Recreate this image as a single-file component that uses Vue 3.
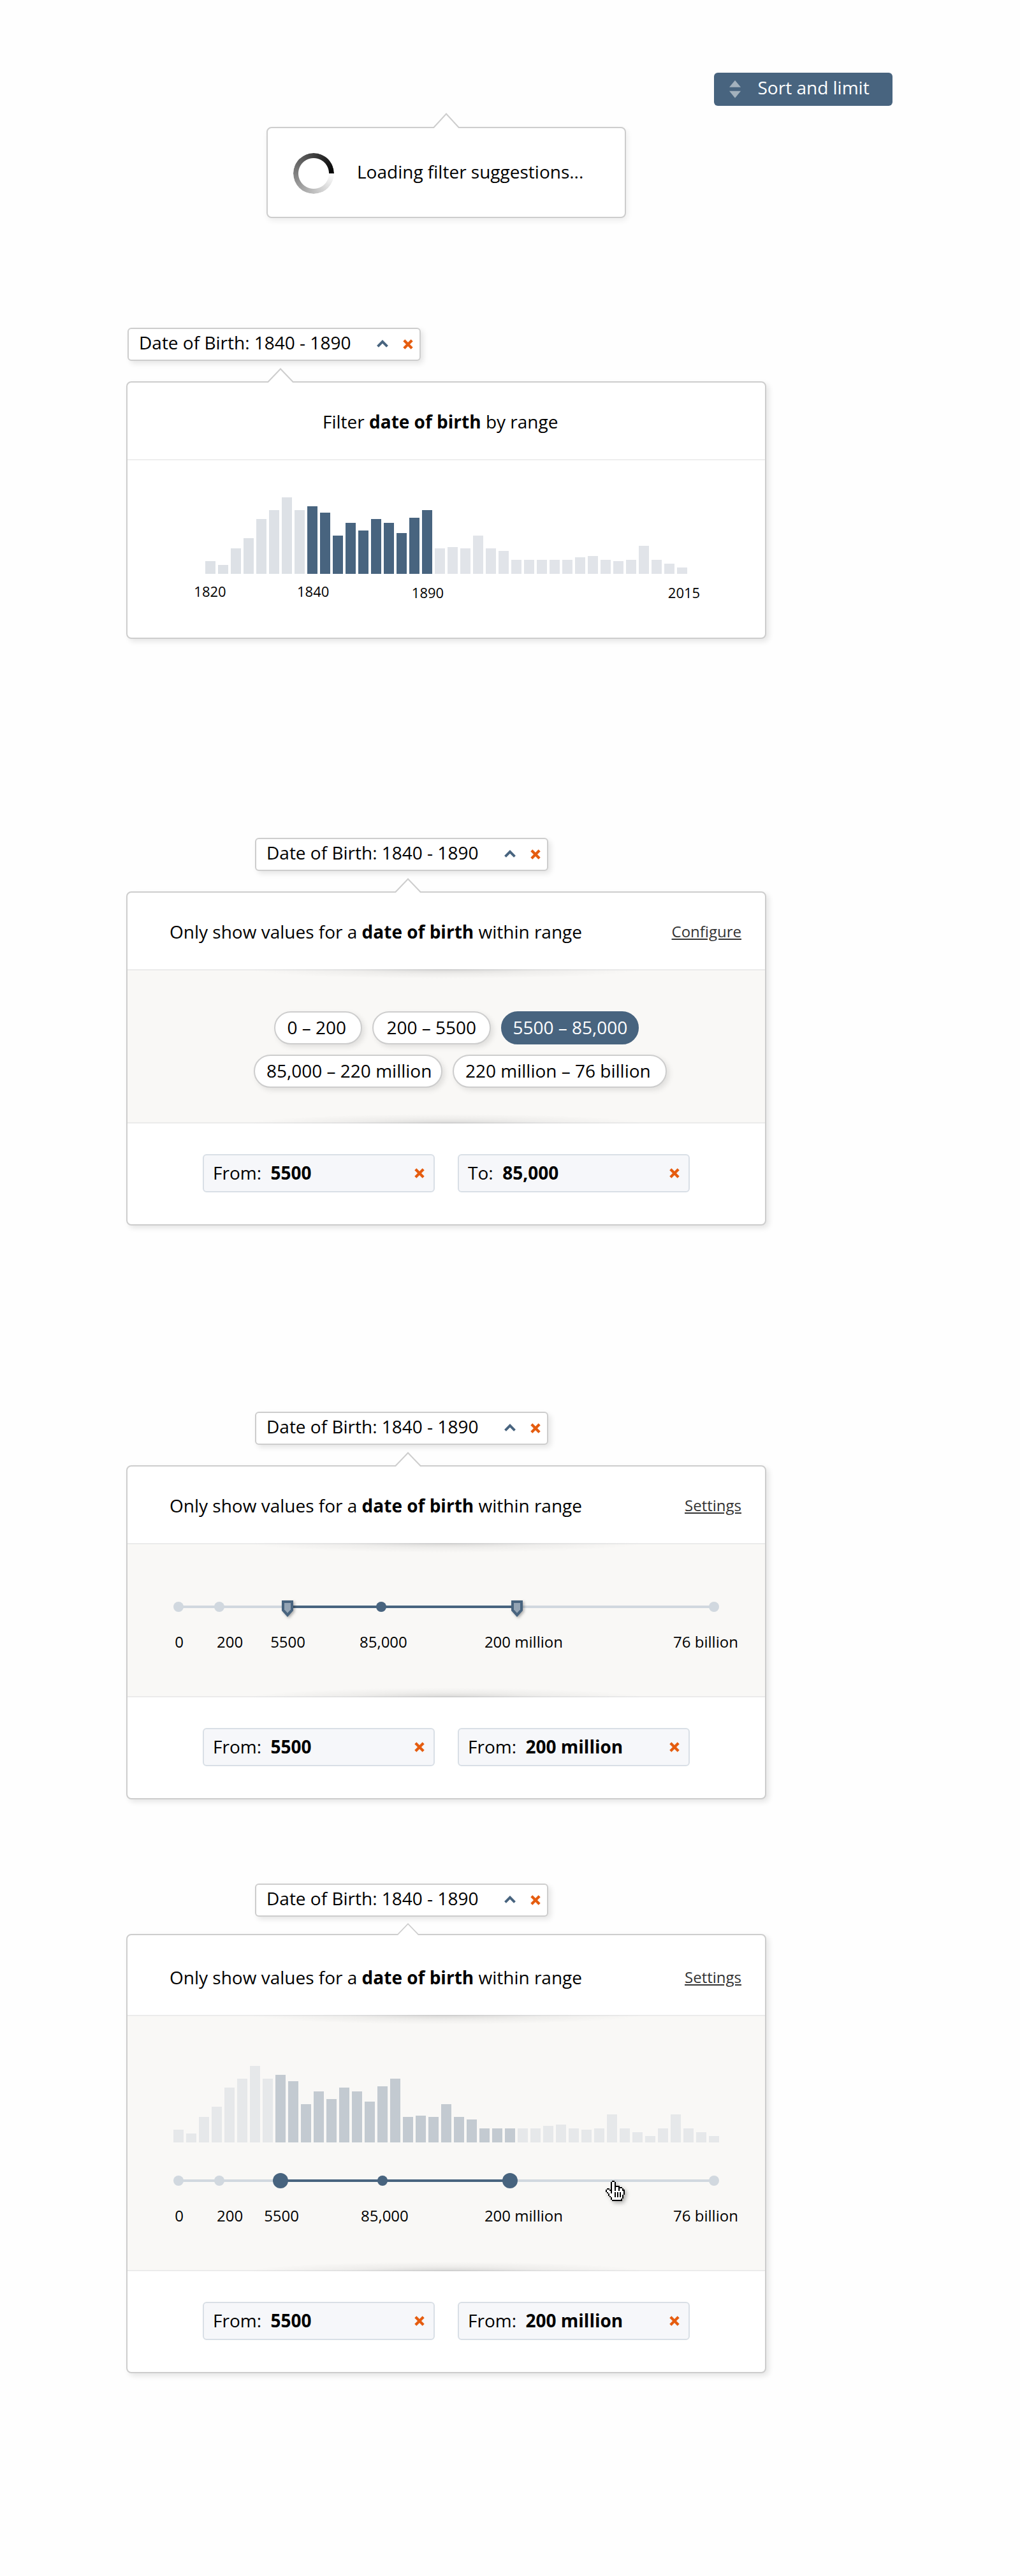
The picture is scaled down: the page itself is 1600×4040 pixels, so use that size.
<script setup>
const histogram = [20, 14, 40, 56, 86, 100, 120, 100, 106, 96, 60, 80, 68, 86, 80, 64, 88, 100, 40, 42, 40, 60, 40, 36, 22, 22, 22, 22, 22, 26, 28, 22, 20, 22, 44, 22, 16, 10]
const longHistogram = [...histogram, 22, 44, 22, 16, 10]

const toBars = (values, from, to) =>
  values.map((height, i) => ({ height, selected: i >= from && i <= to, after: i > to }))

const years = [
  { label: '1820', x: 129.5, y: 36 },
  { label: '1840', x: 291.2, y: 36 },
  { label: '1890', x: 471, y: 38 },
  { label: '2015', x: 873, y: 38 },
]

const pillRows = [
  [
    { text: '0 – 200', width: 138, pad: 18.5 },
    { text: '200 – 5500', width: 186, pad: 20.5 },
    { text: '5500 – 85,000', width: 216, pad: 16.5, active: true },
  ],
  [
    { text: '85,000 – 220 million', width: 296, pad: 18 },
    { text: '220 million – 76 billion', width: 336, pad: 18 },
  ],
]

const panels = [
  {
    id: 'presets',
    link: 'Configure',
    pills: pillRows,
    fields: [{ name: 'From:', value: '5500' }, { name: 'To:', value: '85,000' }],
  },
  {
    id: 'slider',
    link: 'Settings',
    slider: {
      handle: 'tag',
      from: 251,
      to: 611,
      stops: [80, 144, 398, 920],
      labels: [['0', 81], ['200', 160.6], ['5500', 251.6], ['85,000', 401.4], ['200 million', 621.4], ['76 billion', 907]],
    },
    fields: [{ name: 'From:', value: '5500' }, { name: 'From:', value: '200 million' }],
  },
  {
    id: 'combined',
    link: 'Settings',
    bars: toBars(longHistogram, 8, 26),
    slider: {
      handle: 'dot',
      from: 240,
      to: 600,
      stops: [80, 144, 400, 920],
      labels: [['0', 81], ['200', 160.6], ['5500', 241.6], ['85,000', 403.4], ['200 million', 621.4], ['76 billion', 907]],
    },
    fields: [{ name: 'From:', value: '5500' }, { name: 'From:', value: '200 million' }],
  },
]

const yearBars = toBars(histogram, 8, 17)

// Pointer bitmap: '#' outline, 'o' fill
const pointer = [
  '.....##........',
  '....#oo#.......',
  '....#oo#.......',
  '....#oo#.......',
  '....#oo####....',
  '....#oo#oo###..',
  '.##.#oo#oo#oo#.',
  '#oo##oo#oo#oo##',
  '#ooo#ooooooooo#',
  '.#oo#oo#o#o#oo#',
  '..#oooo#o#o#oo#',
  '..#oooo#o#o#o#.',
  '...#ooo#o#o#o#.',
  '....#oooooooo#.',
  '....#ooooooo#..',
  '.....########..',
]
const pixels = pointer.flatMap((row, y) =>
  [...row].map((c, x) => ({ x, y, c })).filter((p) => p.c !== '.'),
)
</script>

<template>
  <main class="page">
    <button class="sort">
      <svg class="sort-icon" width="18" height="28" viewBox="0 0 18 28">
        <path d="M9 0 18 10.7H0ZM0 16.7H18L9 27.7Z" fill="#a3b1bd" />
      </svg>
      <span>Sort and limit</span>
    </button>

    <section class="popup loading">
      <svg class="arrow" width="44" height="24" viewBox="0 0 44 24">
        <path d="M1 24.5 22 1.5 43 24.5" fill="#fff" stroke="#cdcdcd" stroke-width="2" />
      </svg>
      <span class="spinner"></span>
      <span class="loading-text">Loading filter suggestions...</span>
    </section>

    <div class="chip chip-first">
      <span class="chip-text">Date of Birth: 1840 - 1890</span>
      <svg class="chevron" width="18" height="12" viewBox="0 0 18 12"><path d="M1.5 10.3 9 2.8 16.5 10.3" fill="none" stroke="#48647f" stroke-width="4" /></svg>
      <svg class="cross" width="16" height="16" viewBox="0 0 16 16"><path d="M1.8 1.8 14.2 14.2M14.2 1.8 1.8 14.2" stroke="#e55c0f" stroke-width="4.3" /></svg>
    </div>

    <section class="popup panel panel-years">
      <svg class="arrow" width="44" height="24" viewBox="0 0 44 24">
        <path d="M1 24.5 22 2.5 43 24.5" fill="#fff" stroke="#cdcdcd" stroke-width="2" />
      </svg>
      <header class="head head-years">
        <h2>Filter <b>date of birth</b> by range</h2>
      </header>
      <div class="years">
        <div class="bars">
          <i
            v-for="(bar, i) in yearBars"
            :key="i"
            :class="{ selected: bar.selected, after: bar.after }"
            :style="{ height: bar.height + 'px' }"
          ></i>
        </div>
        <svg class="axis" width="1000" height="60">
          <text v-for="year in years" :key="year.label" :x="year.x" :y="year.y" class="year">{{ year.label }}</text>
        </svg>
      </div>
    </section>

    <template v-for="panel in panels" :key="panel.id">
      <div class="chip" :class="'chip-' + panel.id">
        <span class="chip-text">Date of Birth: 1840 - 1890</span>
        <svg class="chevron" width="18" height="12" viewBox="0 0 18 12"><path d="M1.5 10.3 9 2.8 16.5 10.3" fill="none" stroke="#48647f" stroke-width="4" /></svg>
        <svg class="cross" width="16" height="16" viewBox="0 0 16 16"><path d="M1.8 1.8 14.2 14.2M14.2 1.8 1.8 14.2" stroke="#e55c0f" stroke-width="4.3" /></svg>
      </div>

      <section class="popup panel" :class="'panel-' + panel.id">
        <svg class="arrow" width="44" height="24" viewBox="0 0 44 24">
          <path d="M1 24.5 22 2.5 43 24.5" fill="#fff" stroke="#cdcdcd" stroke-width="2" />
        </svg>
        <header class="head">
          <h2>Only show values for a <b>date of birth</b> within range</h2>
          <a class="link">{{ panel.link }}</a>
        </header>

        <div class="body">
          <div v-if="panel.pills" class="pills">
            <div v-for="(row, r) in panel.pills" :key="r" class="pill-row">
              <span
                v-for="pill in row"
                :key="pill.text"
                class="pill"
                :class="{ active: pill.active }"
                :style="{ width: pill.width + 'px', paddingLeft: pill.pad + 'px' }"
              >{{ pill.text }}</span>
            </div>
          </div>

          <div v-if="panel.bars" class="bars bars-muted">
            <i
              v-for="(bar, i) in panel.bars"
              :key="i"
              :class="{ selected: bar.selected }"
              :style="{ height: bar.height + 'px' }"
            ></i>
          </div>

          <svg v-if="panel.slider" class="slider" width="1000" height="100">
            <path d="M80 20H920" stroke="#d1d8df" stroke-width="4" />
            <path :d="`M${panel.slider.from} 20H${panel.slider.to}`" stroke="#48647f" stroke-width="4" />
            <circle
              v-for="x in panel.slider.stops"
              :key="x"
              :cx="x"
              cy="20"
              r="8"
              :fill="x > panel.slider.from && x < panel.slider.to ? '#48647f' : '#d1d8df'"
            />
            <g v-for="x in [panel.slider.from, panel.slider.to]" :key="'h' + x" :transform="`translate(${x} 20)`">
              <circle v-if="panel.slider.handle === 'dot'" r="12" fill="#48647f" />
              <g v-else class="tag">
                <path d="M-9 -10H9V6L0 16L-9 6Z" fill="#48647f" />
                <path d="M-5 -6H5V4.2L0 9.8L-5 4.2Z" fill="#94a4b4" />
              </g>
            </g>
            <text v-for="[label, x] in panel.slider.labels" :key="label" :x="x" y="84" class="tick">{{ label }}</text>
          </svg>

          <svg v-if="panel.bars" class="pointer" width="30" height="32" viewBox="0 0 15 16" shape-rendering="crispEdges">
            <rect
              v-for="p in pixels"
              :key="p.x + '-' + p.y"
              :x="p.x"
              :y="p.y"
              width="1"
              height="1"
              :fill="p.c === '#' ? '#000' : '#fff'"
            />
          </svg>
        </div>

        <footer class="foot">
          <div v-for="field in panel.fields" :key="field.value" class="field">
            <span class="field-name">{{ field.name }}</span>
            <b class="field-value">{{ field.value }}</b>
            <svg class="cross" width="16" height="16" viewBox="0 0 16 16"><path d="M1.8 1.8 14.2 14.2M14.2 1.8 1.8 14.2" stroke="#e55c0f" stroke-width="4.3" /></svg>
          </div>
        </footer>
      </section>
    </template>
  </main>
</template>

<style>
body {
  background: #fefefe;
}
</style>

<style scoped>
.page {
  width: 1600px;
  height: 4040px;
  padding-top: 114px;
  box-sizing: border-box;
  display: flex;
  flex-direction: column;
  align-items: flex-start;
  background: #fefefe;
  color: #000;
  font: 28px/38px 'Open Sans', sans-serif;
}
.page * {
  box-sizing: border-box;
}
svg {
  display: block;
  flex: none;
}

.sort {
  display: flex;
  align-items: center;
  gap: 26.5px;
  width: 280px;
  height: 52px;
  flex: none;
  margin-left: 1120px;
  padding: 0 0 0 24px;
  border: 0;
  border-radius: 6px;
  background: #48647f;
  color: #fff;
  font: inherit;
}
.sort span {
  margin-bottom: 6px;
}

.popup {
  position: relative;
  flex: none;
  border: 2px solid #cdcdcd;
  border-radius: 8px;
  background: #fff;
  box-shadow: 4px 4px 8px rgba(0, 0, 0, 0.1);
}
.arrow {
  position: absolute;
  top: -24px;
  left: 418px;
}

.loading {
  display: flex;
  align-items: center;
  gap: 36px;
  width: 564px;
  height: 143px;
  margin: 33px 0 0 418px;
  padding: 3px 0 0 40px;
  box-shadow: 2px 4px 10px rgba(0, 0, 0, 0.07);
}
.loading .arrow {
  left: 258px;
}
.spinner {
  width: 64px;
  height: 64px;
  border-radius: 50%;
  background: conic-gradient(from 90deg, #fff, #000);
  mask: radial-gradient(circle, transparent 23.5px, #000 24.5px);
}
.loading-text {
  margin-bottom: 6px;
}

.chip {
  display: flex;
  align-items: center;
  flex: none;
  width: 460px;
  height: 52px;
  margin-left: 400px;
  padding: 0 10px 0 16px;
  border: 2px solid #cdcdcd;
  border-radius: 6px;
  background: #fff;
  box-shadow: 4px 4px 8px rgba(0, 0, 0, 0.1);
}
.chip-text {
  margin: 0 auto 6px 0;
}
.chevron {
  margin: 0 23px 3px 0;
}
.chip-first {
  margin: 172px 0 0 200px;
}
.chip-presets {
  margin-top: 312px;
}
.chip-slider {
  margin-top: 292px;
}
.chip-combined {
  margin-top: 132px;
}

.panel {
  width: 1004px;
  margin: 32px 0 0 198px;
}
.panel-years {
  height: 404px;
}
.panel-years .arrow {
  left: 218px;
}
.panel-combined {
  margin-top: 27px;
}
.panel-combined .arrow {
  top: -20px;
  height: 20px;
}
.head {
  display: flex;
  align-items: center;
  justify-content: space-between;
  height: 120px;
  padding: 2px 37px 0 66px;
}
.panel-combined .head {
  height: 125px;
  padding-top: 7px;
}
.head-years {
  padding-left: 306px;
}
h2 {
  margin: 0;
  font: inherit;
  white-space: nowrap;
}
b {
  font-weight: 700;
}
.link {
  margin-bottom: 1px;
  color: #333;
  font-size: 24px;
  text-decoration: underline;
}

.years {
  padding-top: 58px;
  border-top: 2px solid #eee;
}
.bars {
  display: flex;
  align-items: flex-end;
  gap: 4px;
  height: 120px;
  padding-left: 122px;
}
.bars i {
  width: 16px;
  background: #dde1e6;
}
.bars i.after {
  background: #e1e4e9;
}
.bars i.selected {
  background: #48647f;
}
.bars-muted {
  margin-bottom: 40px;
  padding-left: 72px;
}
.bars-muted i {
  background: #e6e8ea;
}
.bars-muted i.selected {
  background: #c3cad1;
}
.year {
  font-size: 22px;
  text-anchor: middle;
}
.tick {
  font-size: 24px;
  text-anchor: middle;
}
.tag {
  filter: drop-shadow(2px 2px 2px rgba(0, 0, 0, 0.3));
}

.body {
  position: relative;
  height: 242px;
  padding-top: 78px;
  border: solid #ebebeb;
  border-width: 2px 0;
  background: #f9f8f6;
}
.body::before,
.body::after {
  content: '';
  position: absolute;
  left: 190px;
  width: 620px;
  height: 15px;
}
.body::before {
  top: -2px;
  background: radial-gradient(ellipse 50% 100% at 50% 0, rgba(0, 0, 0, 0.13), rgba(0, 0, 0, 0.045) 50%, transparent);
}
.body::after {
  bottom: -2px;
  background: radial-gradient(ellipse 50% 100% at 50% 100%, rgba(0, 0, 0, 0.13), rgba(0, 0, 0, 0.045) 50%, transparent);
}
.panel-combined .body {
  height: 402px;
}
.pills {
  display: flex;
  flex-direction: column;
  gap: 16px;
  margin-top: -14px;
  padding-left: 198px;
}
.pill-row {
  display: flex;
  gap: 16px;
}
.pill-row:first-child {
  padding-left: 32px;
}
.pill {
  height: 52px;
  padding-top: 4px;
  border: 2px solid #cdcdcd;
  border-radius: 26px;
  background: #fff;
  box-shadow: 4px 4px 8px rgba(0, 0, 0, 0.1);
  white-space: nowrap;
}
.pill.active {
  border-color: #48647f;
  background: #48647f;
  color: #fff;
  box-shadow: none;
}
.pointer {
  position: absolute;
  top: 258px;
  left: 750px;
  filter: drop-shadow(3px 3px 3px rgba(0, 0, 0, 0.3));
}

.foot {
  display: flex;
  gap: 36px;
  height: 158px;
  padding: 48px 118px 50px;
}
.field {
  display: flex;
  align-items: center;
  width: 364px;
  height: 60px;
  padding: 0 14px;
  border: 2px solid #d9dfe6;
  border-radius: 6px;
  background: #f6f7fa;
}
.field-name {
  margin: 0 14.5px 2px 0;
}
.field-value {
  margin: 0 auto 2px 0;
}
</style>
